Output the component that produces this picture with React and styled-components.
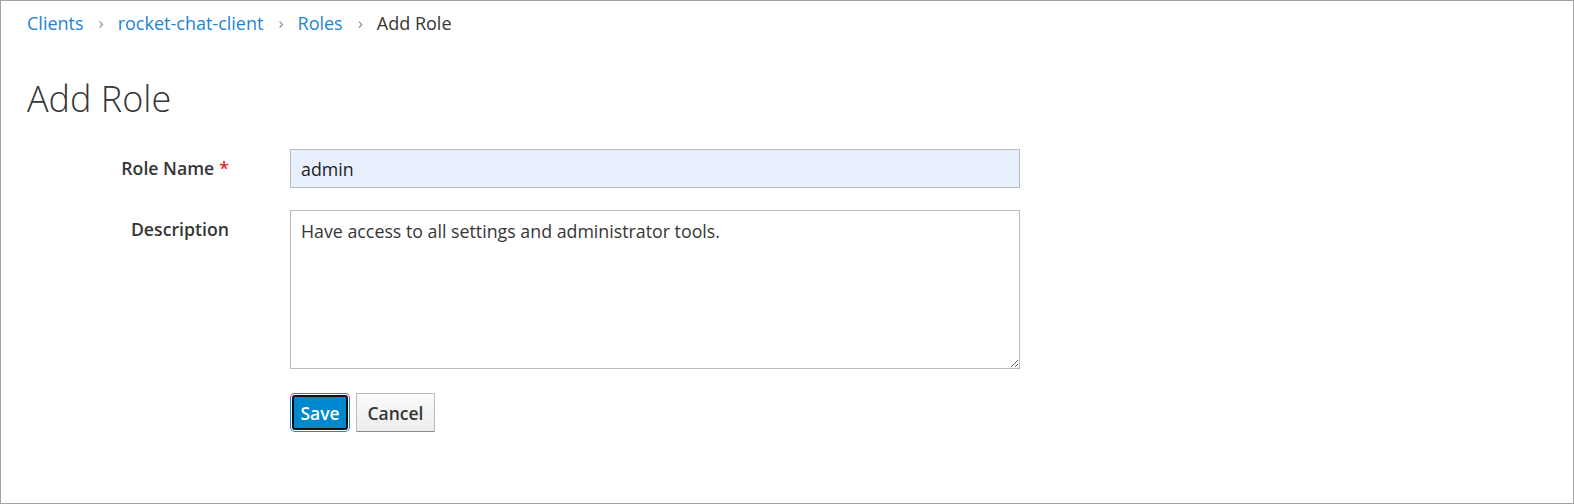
import styled, { createGlobalStyle } from 'styled-components';

const GlobalStyle = createGlobalStyle`
  html, body {
    margin: 0;
    padding: 0;
    background: #fff;
  }
  body {
    font-family: "Open Sans", "Liberation Sans", sans-serif;
    color: #363636;
  }
`;

const Frame = styled.div`
  box-sizing: border-box;
  width: 1574px;
  height: 504px;
  border: 1px solid #a3a3a3;
  padding: 10px 26px 0;
`;

const Breadcrumb = styled.nav`
  display: flex;
  align-items: center;
  font-size: 18px;
  line-height: 24px;
`;

const Crumb = styled.a`
  color: ${(p) => (p.$current ? '#363636' : '#1f84d2')};
  text-decoration: none;
`;

const Sep = styled.span`
  color: #8b8d8f;
  font-size: 17px;
  margin: 0 14px 0 15px;
`;

const Title = styled.h1`
  margin: 42px 0 0;
  font-size: 36px;
  font-weight: 300;
  line-height: 44px;
  color: #363636;
`;

const Form = styled.form`
  display: grid;
  grid-template-columns: 202px 730px;
  column-gap: 61px;
  row-gap: 22px;
  margin-top: 28px;
`;

const Label = styled.label`
  justify-self: end;
  font-size: 17.7px;
  font-weight: 600;
  color: #363636;
  padding-top: ${(p) => p.$top}px;
`;

const Required = styled.span`
  color: #e3222c;
  margin-left: 5px;
`;

const TextInput = styled.input`
  box-sizing: border-box;
  width: 100%;
  height: 39px;
  border: 1px solid #bbbbbb;
  background: #e8f0fe;
  padding: 0 10px;
  font: inherit;
  font-size: 17.8px;
  color: #222;
  outline: none;
`;

const TextArea = styled.textarea`
  box-sizing: border-box;
  width: 100%;
  height: 159px;
  border: 1px solid #bbbbbb;
  padding: 8px 10px;
  font: inherit;
  font-size: 17.8px;
  line-height: 24px;
  color: #363636;
  outline: none;
`;

const Actions = styled.div`
  grid-column: 2;
  display: flex;
  align-items: center;
  gap: 6px;
  margin-top: 2px;
`;

const Button = styled.button`
  box-sizing: border-box;
  font-family: inherit;
  font-size: 17.5px;
  font-weight: 600;
  cursor: pointer;
  padding: 0;

  &.primary {
    width: 56px;
    height: 35px;
    margin: 2px;
    background: #0088ce;
    color: #fff;
    border: 2px solid #111;
    border-radius: 3px;
    box-shadow: 0 0 0 1px #fff, 0 0 0 2px #1f84d2;
  }

  &.secondary {
    width: 79px;
    height: 39px;
    background: linear-gradient(#fafafa, #ededed);
    color: #363636;
    border: 1px solid #bbb;
    border-bottom-color: #8b8d8f;
    border-radius: 1px;
  }
`;

export default function App() {
  return (
    <>
      <GlobalStyle />
      <Frame>
        <Breadcrumb>
          <Crumb href="#">Clients</Crumb>
          <Sep>›</Sep>
          <Crumb href="#">rocket-chat-client</Crumb>
          <Sep>›</Sep>
          <Crumb href="#">Roles</Crumb>
          <Sep>›</Sep>
          <Crumb $current>Add Role</Crumb>
        </Breadcrumb>
        <Title>Add Role</Title>
        <Form onSubmit={(e) => e.preventDefault()}>
          <Label $top={7}>
            Role Name<Required>*</Required>
          </Label>
          <TextInput defaultValue="admin" />
          <Label $top={7}>Description</Label>
          <TextArea defaultValue="Have access to all settings and administrator tools." />
          <Actions>
            <Button className="primary">Save</Button>
            <Button className="secondary" type="button">Cancel</Button>
          </Actions>
        </Form>
      </Frame>
    </>
  );
}
